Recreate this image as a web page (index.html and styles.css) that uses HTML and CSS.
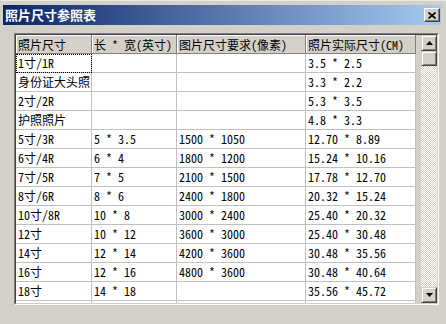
FILE: index.html
```html
<!DOCTYPE html>
<html lang="zh-CN">
<head>
    <meta charset="UTF-8">
    <meta name="viewport" content="width=device-width, initial-scale=1.0">
    <title>照片尺寸参照表</title>
    <link rel="stylesheet" href="styles.css">
</head>
<body>
    <div class="window">
        <div class="titlebar">
            <span class="title">照片尺寸参照表</span>
            <span class="close">
                <svg width="8" height="7" viewBox="0 0 8 7">
                    <path d="M0.5 0.5 L7.5 6.5 M7.5 0.5 L0.5 6.5" stroke="#000" stroke-width="1.6" fill="none"/>
                </svg>
            </span>
        </div>

        <div class="client">
            <div class="grid">
                <div class="grid-body">
                    <div class="cells">
                        <table>
                            <colgroup>
                                <col class="c1">
                                <col class="c2">
                                <col class="c3">
                                <col class="c4">
                            </colgroup>
                            <tr>
                                <th>照片尺寸</th>
                                <th>长 * 宽(英寸)</th>
                                <th>图片尺寸要求(像素)</th>
                                <th>照片实际尺寸(CM)</th>
                            </tr>
                            <tr>
                                <td class="focus">1寸/1R</td>
                                <td></td>
                                <td></td>
                                <td>3.5 * 2.5</td>
                            </tr>
                            <tr>
                                <td>身份证大头照</td>
                                <td></td>
                                <td></td>
                                <td>3.3 * 2.2</td>
                            </tr>
                            <tr>
                                <td>2寸/2R</td>
                                <td></td>
                                <td></td>
                                <td>5.3 * 3.5</td>
                            </tr>
                            <tr>
                                <td>护照照片</td>
                                <td></td>
                                <td></td>
                                <td>4.8 * 3.3</td>
                            </tr>
                            <tr>
                                <td>5寸/3R</td>
                                <td>5 * 3.5</td>
                                <td>1500 * 1050</td>
                                <td>12.70 * 8.89</td>
                            </tr>
                            <tr>
                                <td>6寸/4R</td>
                                <td>6 * 4</td>
                                <td>1800 * 1200</td>
                                <td>15.24 * 10.16</td>
                            </tr>
                            <tr>
                                <td>7寸/5R</td>
                                <td>7 * 5</td>
                                <td>2100 * 1500</td>
                                <td>17.78 * 12.70</td>
                            </tr>
                            <tr>
                                <td>8寸/6R</td>
                                <td>8 * 6</td>
                                <td>2400 * 1800</td>
                                <td>20.32 * 15.24</td>
                            </tr>
                            <tr>
                                <td>10寸/8R</td>
                                <td>10 * 8</td>
                                <td>3000 * 2400</td>
                                <td>25.40 * 20.32</td>
                            </tr>
                            <tr>
                                <td>12寸</td>
                                <td>10 * 12</td>
                                <td>3600 * 3000</td>
                                <td>25.40 * 30.48</td>
                            </tr>
                            <tr>
                                <td>14寸</td>
                                <td>12 * 14</td>
                                <td>4200 * 3600</td>
                                <td>30.48 * 35.56</td>
                            </tr>
                            <tr>
                                <td>16寸</td>
                                <td>12 * 16</td>
                                <td>4800 * 3600</td>
                                <td>30.48 * 40.64</td>
                            </tr>
                            <tr>
                                <td>18寸</td>
                                <td>14 * 18</td>
                                <td></td>
                                <td>35.56 * 45.72</td>
                            </tr>
                            <tr>
                                <td></td>
                                <td></td>
                                <td></td>
                                <td></td>
                            </tr>
                        </table>
                    </div>

                    <div class="scrollbar">
                        <div class="sb-btn">
                            <svg width="7" height="4" viewBox="0 0 7 4"><path d="M3.5 0 L7 4 L0 4 Z" fill="#000"/></svg>
                        </div>
                        <div class="sb-thumb"></div>
                        <div class="sb-track"></div>
                        <div class="sb-btn">
                            <svg width="7" height="4" viewBox="0 0 7 4"><path d="M0 0 L7 0 L3.5 4 Z" fill="#000"/></svg>
                        </div>
                    </div>
                </div>
            </div>
        </div>
    </div>
</body>
</html>
```

FILE: styles.css
```css
* {
    box-sizing: border-box;
}

body {
    margin: 0;
    overflow: hidden;
    background-color: #d4d0c8;
    font-family: "Noto Sans Mono CJK SC", "Liberation Mono", "Noto Sans CJK SC", monospace;
    font-size: 12px;
    color: #000;
}

.window {
    height: 324px;
    padding: 5px 5px 0 3px;
    box-shadow: inset 0 1px 0 #ece9e2;
}

/* Title bar with the classic blue gradient */
.titlebar {
    height: 20px;
    display: flex;
    align-items: center;
    justify-content: space-between;
    padding: 0 1px 0 2px;
    background: linear-gradient(to right, #0a246a, #a6caf0);
    color: #fff;
}

.title {
    font-family: "Noto Sans CJK SC", sans-serif;
    font-weight: bold;
    font-size: 13px;
    line-height: 20px;
}

.close {
    width: 16px;
    height: 14px;
    display: flex;
    align-items: center;
    justify-content: center;
    background-color: #d4d0c8;
    border: 1px solid;
    border-color: #fff #404040 #404040 #fff;
    box-shadow: inset -1px -1px #808080;
}

.client {
    padding: 8px 2px 0 11px;
}

/* Sunken grid frame */
.grid {
    height: 272px;
    border: 1px solid;
    border-color: #808080 #fff #fff #808080;
}

.grid-body {
    height: 100%;
    display: flex;
    border: 1px solid;
    border-color: #404040 #d4d0c8 #d4d0c8 #404040;
}

.cells {
    flex: 1;
    overflow: hidden;
    background-color: #d4d0c8;
}

table {
    border-collapse: separate;
    border-spacing: 0;
    table-layout: fixed;
    width: 400px;
}

.c1 { width: 76px; }
.c2 { width: 85px; }
.c3 { width: 129px; }
.c4 { width: 110px; }

th {
    height: 19px;
    padding: 0 2px;
    text-align: left;
    font-weight: normal;
    line-height: 17px;
    white-space: nowrap;
    overflow: hidden;
    background-color: #d4d0c8;
    border-right: 1px solid #808080;
    border-bottom: 1px solid #808080;
    box-shadow: inset 1px 1px #fff;
}

td {
    height: 19px;
    padding: 0 2px;
    line-height: 18px;
    white-space: nowrap;
    overflow: hidden;
    background-color: #fff;
    border-right: 1px solid #c0c0c0;
    border-bottom: 1px solid #c0c0c0;
}

td.focus {
    outline: 1px dotted #000;
    outline-offset: -1px;
}

/* Vertical scrollbar */
.scrollbar {
    width: 16px;
    display: flex;
    flex-direction: column;
}

.sb-btn,
.sb-thumb {
    display: flex;
    align-items: center;
    justify-content: center;
    background-color: #d4d0c8;
    border: 1px solid;
    border-color: #d4d0c8 #404040 #404040 #d4d0c8;
    box-shadow: inset 1px 1px #fff, inset -1px -1px #808080;
}

.sb-btn {
    height: 16px;
}

.sb-thumb {
    height: 15px;
}

.sb-track {
    flex: 1;
    background: repeating-conic-gradient(#fff 0 25%, #d4d0c8 0 50%) 0 0 / 2px 2px;
}
```
